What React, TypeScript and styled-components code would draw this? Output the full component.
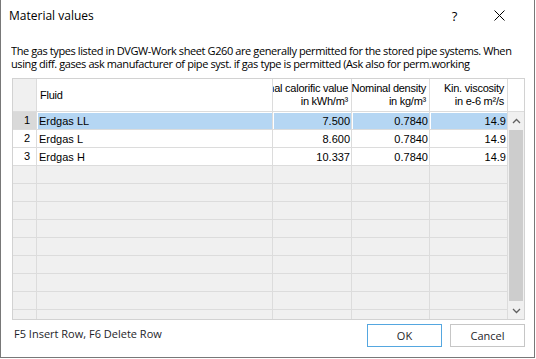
import { createGlobalStyle } from "styled-components";
import styled from "styled-components";

const GlobalStyle = createGlobalStyle`
    html, body {
        margin: 0;
        padding: 0;
        background: #ffffff;
    }
    * {
        box-sizing: border-box;
    }
`;

const uiFont = `"Open Sans", "Noto Sans", sans-serif`;
const gridFont = `"Liberation Sans", Arial, sans-serif`;

const COLS = "24px 236px 79px 78px 78px 16px";

const Window = styled.div`
    width: 535px;
    height: 358px;
    border: 1px solid #787878;
    border-top: none;
    background: #ffffff;
    display: flex;
    flex-direction: column;
    font-family: ${uiFont};
    color: #000000;
`;

const TitleBar = styled.div`
    height: 31px;
    display: flex;
    align-items: center;
    padding: 0 12px 0 8px;
    font-size: 12px;
`;

const Title = styled.div`
    flex: 1;
`;

const TitleButton = styled.div`
    width: 45px;
    height: 31px;
    display: flex;
    align-items: center;
    justify-content: center;
    font-size: 13px;
`;

const Description = styled.div`
    margin: 13px 20px 0 10px;
    height: 28px;
    overflow: hidden;
    font-size: 11px;
    line-height: 13px;
    letter-spacing: -0.4px;
`;

const Table = styled.div`
    margin: 6px 0 0 11px;
    width: 513px;
    height: 242px;
    border: 1px solid #d2d2d2;
    background: #f0f0f0;
    display: flex;
    flex-direction: column;
    font-family: ${gridFont};
    font-size: 11px;
    color: #000000;
    overflow: hidden;
`;

const HeaderRow = styled.div`
    display: grid;
    grid-template-columns: ${COLS};
    height: 33px;
    flex-shrink: 0;
`;

const HeaderCell = styled.div<{ $corner?: boolean; $align?: "left" | "right" }>`
    background: ${(p) => (p.$corner ? "#f0f0f0" : "#ffffff")};
    border-right: 1px solid #dcdcdc;
    border-bottom: 1px solid #dcdcdc;
    display: flex;
    flex-direction: column;
    justify-content: center;
    align-items: ${(p) => (p.$align === "right" ? "flex-end" : "flex-start")};
    padding: ${(p) => (p.$align === "right" ? "0 3px 0 0" : "0 0 0 3px")};
    line-height: 13px;
    letter-spacing: -0.25px;
    overflow: hidden;

    &:last-child {
        border-right: none;
    }
`;

const HeaderLine = styled.span`
    white-space: nowrap;
    flex-shrink: 0;
`;

const Body = styled.div`
    flex: 1;
    display: flex;
    overflow: hidden;
`;

const Rows = styled.div`
    flex: 1;
    overflow: hidden;
`;

const Row = styled.div`
    display: grid;
    grid-template-columns: 24px 236px 79px 78px 78px;
    height: 18px;
`;

const RowHeader = styled.div<{ $filled?: boolean; $selected?: boolean }>`
    background: ${(p) => (p.$selected ? "#d9d9d9" : p.$filled ? "#ffffff" : "#f0f0f0")};
    border-right: 1px solid #dcdcdc;
    border-bottom: 1px solid #dcdcdc;
    text-align: right;
    padding-right: 6px;
    line-height: 17px;
`;

const Cell = styled.div<{ $filled?: boolean }>`
    background: ${(p) => (p.$filled ? "#ffffff" : "#f0f0f0")};
    border-right: 1px solid #dcdcdc;
    border-bottom: 1px solid #dcdcdc;
    padding: 1px 0 0 1px;
    overflow: hidden;
`;

const CellInner = styled.div<{ $selected?: boolean; $num?: boolean }>`
    height: 16px;
    line-height: 16px;
    background: ${(p) => (p.$selected ? "#b5d6f3" : "transparent")};
    text-align: ${(p) => (p.$num ? "right" : "left")};
    padding: ${(p) => (p.$num ? "0 1px 0 0" : "0 0 0 1px")};
    white-space: nowrap;
`;

const ScrollBar = styled.div`
    width: 16px;
    background: #f0f0f0;
    display: flex;
    flex-direction: column;
`;

const ScrollArrow = styled.div`
    height: 17px;
    display: flex;
    align-items: center;
    justify-content: center;
    flex-shrink: 0;
`;

const ScrollThumb = styled.div`
    flex: 1;
    margin: 1px 1px;
    background: #cdcdcd;
`;

const Footer = styled.div`
    display: flex;
    align-items: flex-start;
    margin: 4px 9px 0 13px;
`;

const FooterText = styled.div`
    flex: 1;
    font-size: 11px;
    padding-top: 2px;
    color: #1e1e2a;
`;

const Button = styled.div<{ $default?: boolean }>`
    width: 75px;
    height: 23px;
    margin-left: 8px;
    border: 1px solid ${(p) => (p.$default ? "#55a7e0" : "#c6c6c6")};
    background: #ffffff;
    display: flex;
    align-items: center;
    justify-content: center;
    font-size: 11px;
    color: #1e1e2a;
`;

type Fluid = { name: string; cal: string; dens: string; visc: string };

const fluids: Fluid[] = [
    { name: "Erdgas LL", cal: "7.500", dens: "0.7840", visc: "14.9" },
    { name: "Erdgas L", cal: "8.600", dens: "0.7840", visc: "14.9" },
    { name: "Erdgas H", cal: "10.337", dens: "0.7840", visc: "14.9" },
];

const TOTAL_ROWS = 12;

const Chevron = ({ up }: { up?: boolean }) => (
    <svg width="9" height="6" viewBox="0 0 9 6">
        <path
            d={up ? "M1 5 L4.5 1.5 L8 5" : "M1 1 L4.5 4.5 L8 1"}
            fill="none"
            stroke="#606060"
            strokeWidth="1.3"
        />
    </svg>
);

export default function App() {
    const rows = Array.from({ length: TOTAL_ROWS }, (_, i) => fluids[i]);

    return (
        <>
            <GlobalStyle />
            <Window>
                <TitleBar>
                    <Title>Material values</Title>
                    <TitleButton>?</TitleButton>
                    <TitleButton>
                        <svg width="11" height="11" viewBox="0 0 11 11">
                            <path d="M0.5 0.5 L10.5 10.5 M10.5 0.5 L0.5 10.5" stroke="#000" strokeWidth="1" />
                        </svg>
                    </TitleButton>
                </TitleBar>
                <Description>
                    The gas types listed in DVGW-Work sheet G260 are generally permitted for the stored pipe
                    systems. When using diff. gases ask manufacturer of pipe syst. if gas type is permitted (Ask
                    also for perm.working pressure and temperature).
                </Description>
                <Table>
                    <HeaderRow>
                        <HeaderCell $corner />
                        <HeaderCell>
                            <HeaderLine>Fluid</HeaderLine>
                        </HeaderCell>
                        <HeaderCell $align="right">
                            <HeaderLine>Nominal calorific value</HeaderLine>
                            <HeaderLine>in kWh/m³</HeaderLine>
                        </HeaderCell>
                        <HeaderCell $align="right">
                            <HeaderLine>Nominal density</HeaderLine>
                            <HeaderLine>in kg/m³</HeaderLine>
                        </HeaderCell>
                        <HeaderCell $align="right">
                            <HeaderLine>Kin. viscosity</HeaderLine>
                            <HeaderLine>in e-6 m²/s</HeaderLine>
                        </HeaderCell>
                        <HeaderCell />
                    </HeaderRow>
                    <Body>
                        <Rows>
                            {rows.map((f, i) => {
                                const filled = !!f;
                                const selected = i === 0;
                                return (
                                    <Row key={i}>
                                        <RowHeader $filled={filled} $selected={selected}>
                                            {filled ? i + 1 : ""}
                                        </RowHeader>
                                        <Cell $filled={filled}>
                                            <CellInner $selected={selected}>{f?.name}</CellInner>
                                        </Cell>
                                        <Cell $filled={filled}>
                                            <CellInner $selected={selected} $num>
                                                {f?.cal}
                                            </CellInner>
                                        </Cell>
                                        <Cell $filled={filled}>
                                            <CellInner $selected={selected} $num>
                                                {f?.dens}
                                            </CellInner>
                                        </Cell>
                                        <Cell $filled={filled}>
                                            <CellInner $selected={selected} $num>
                                                {f?.visc}
                                            </CellInner>
                                        </Cell>
                                    </Row>
                                );
                            })}
                        </Rows>
                        <ScrollBar>
                            <ScrollArrow>
                                <Chevron up />
                            </ScrollArrow>
                            <ScrollThumb />
                            <ScrollArrow>
                                <Chevron />
                            </ScrollArrow>
                        </ScrollBar>
                    </Body>
                </Table>
                <Footer>
                    <FooterText>F5 Insert Row, F6 Delete Row</FooterText>
                    <Button $default>OK</Button>
                    <Button>Cancel</Button>
                </Footer>
            </Window>
        </>
    );
}
